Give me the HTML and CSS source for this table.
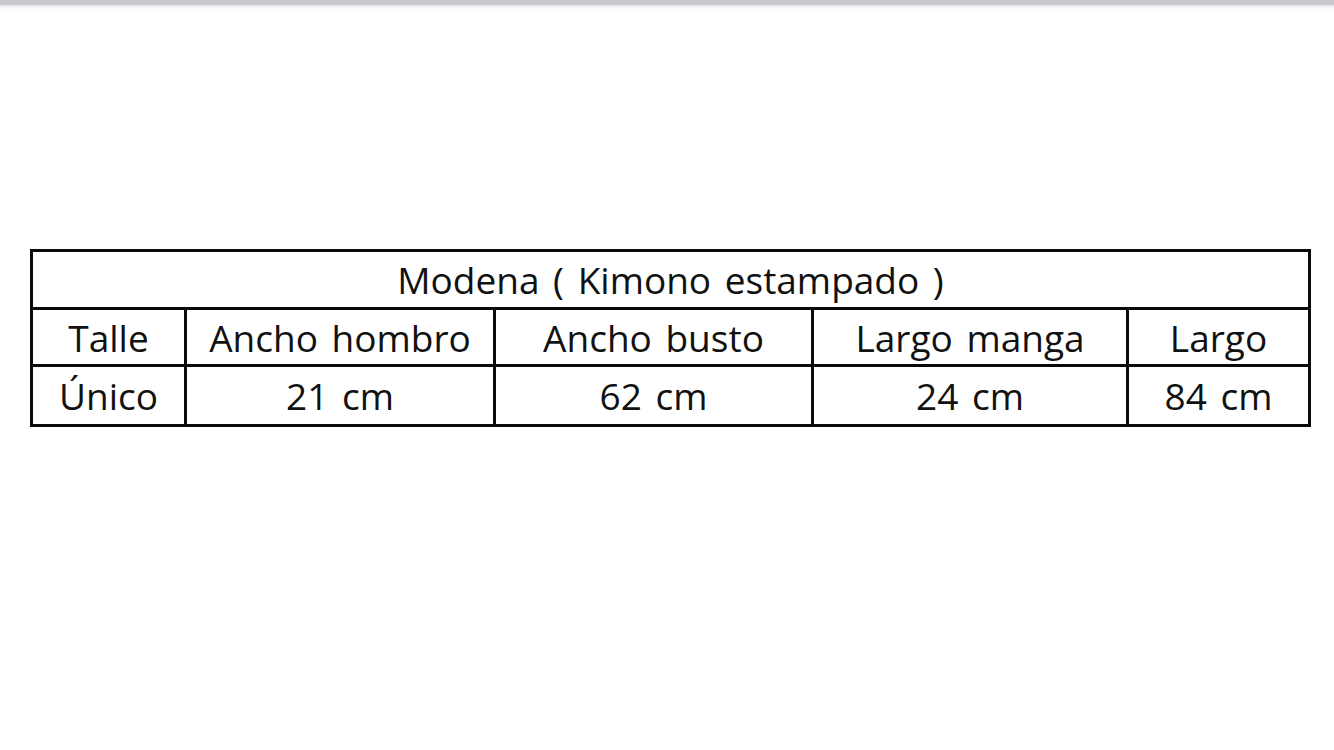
FILE: index.html
```html
<!DOCTYPE html>
<html lang="es">
<head>
<meta charset="utf-8">
<title>Modena</title>
<link rel="stylesheet" href="styles.css">
</head>
<body>
<div class="topbar"></div>
<main class="page">
  <table class="sizes">
    <colgroup>
      <col class="c1"><col class="c2"><col class="c3"><col class="c4"><col class="c5">
    </colgroup>
    <tr class="r1"><td colspan="5">Modena ( Kimono estampado )</td></tr>
    <tr class="r2"><td>Talle</td><td>Ancho hombro</td><td>Ancho busto</td><td>Largo manga</td><td>Largo</td></tr>
    <tr class="r3"><td>Único</td><td>21 cm</td><td>62 cm</td><td>24 cm</td><td>84 cm</td></tr>
  </table>
</main>
</body>
</html>
```
FILE: styles.css
```css
html, body {
  margin: 0;
  padding: 0;
  background: #ffffff;
}
body {
  width: 1334px;
  height: 750px;
  overflow: hidden;
  font-family: "Open Sans", "Noto Sans", sans-serif;
  color: #111111;
}
.topbar {
  height: 5px;
  background: #cac9ce;
  border-bottom: 2px solid #e8e8ec;
  box-shadow: 0 2px 3px rgba(0,0,0,0.03);
}
.page {
  padding: 242px 0 0 30px;
}
.sizes {
  border-collapse: collapse;
  table-layout: fixed;
  width: 1279px;
  font-size: 37px;
  word-spacing: 4px;
}
.sizes td {
  border: 3px solid #0a0a0a;
  text-align: center;
  vertical-align: middle;
  padding: 0;
  line-height: 1;
  white-space: nowrap;
}
.c1 { width: 154px; }
.c2 { width: 309px; }
.c3 { width: 318px; }
.c4 { width: 315px; }
.c5 { width: 182px; }
.r1 td { height: 55px; }
.r2 td { height: 54px; }
.r3 td { height: 57px; }
```
